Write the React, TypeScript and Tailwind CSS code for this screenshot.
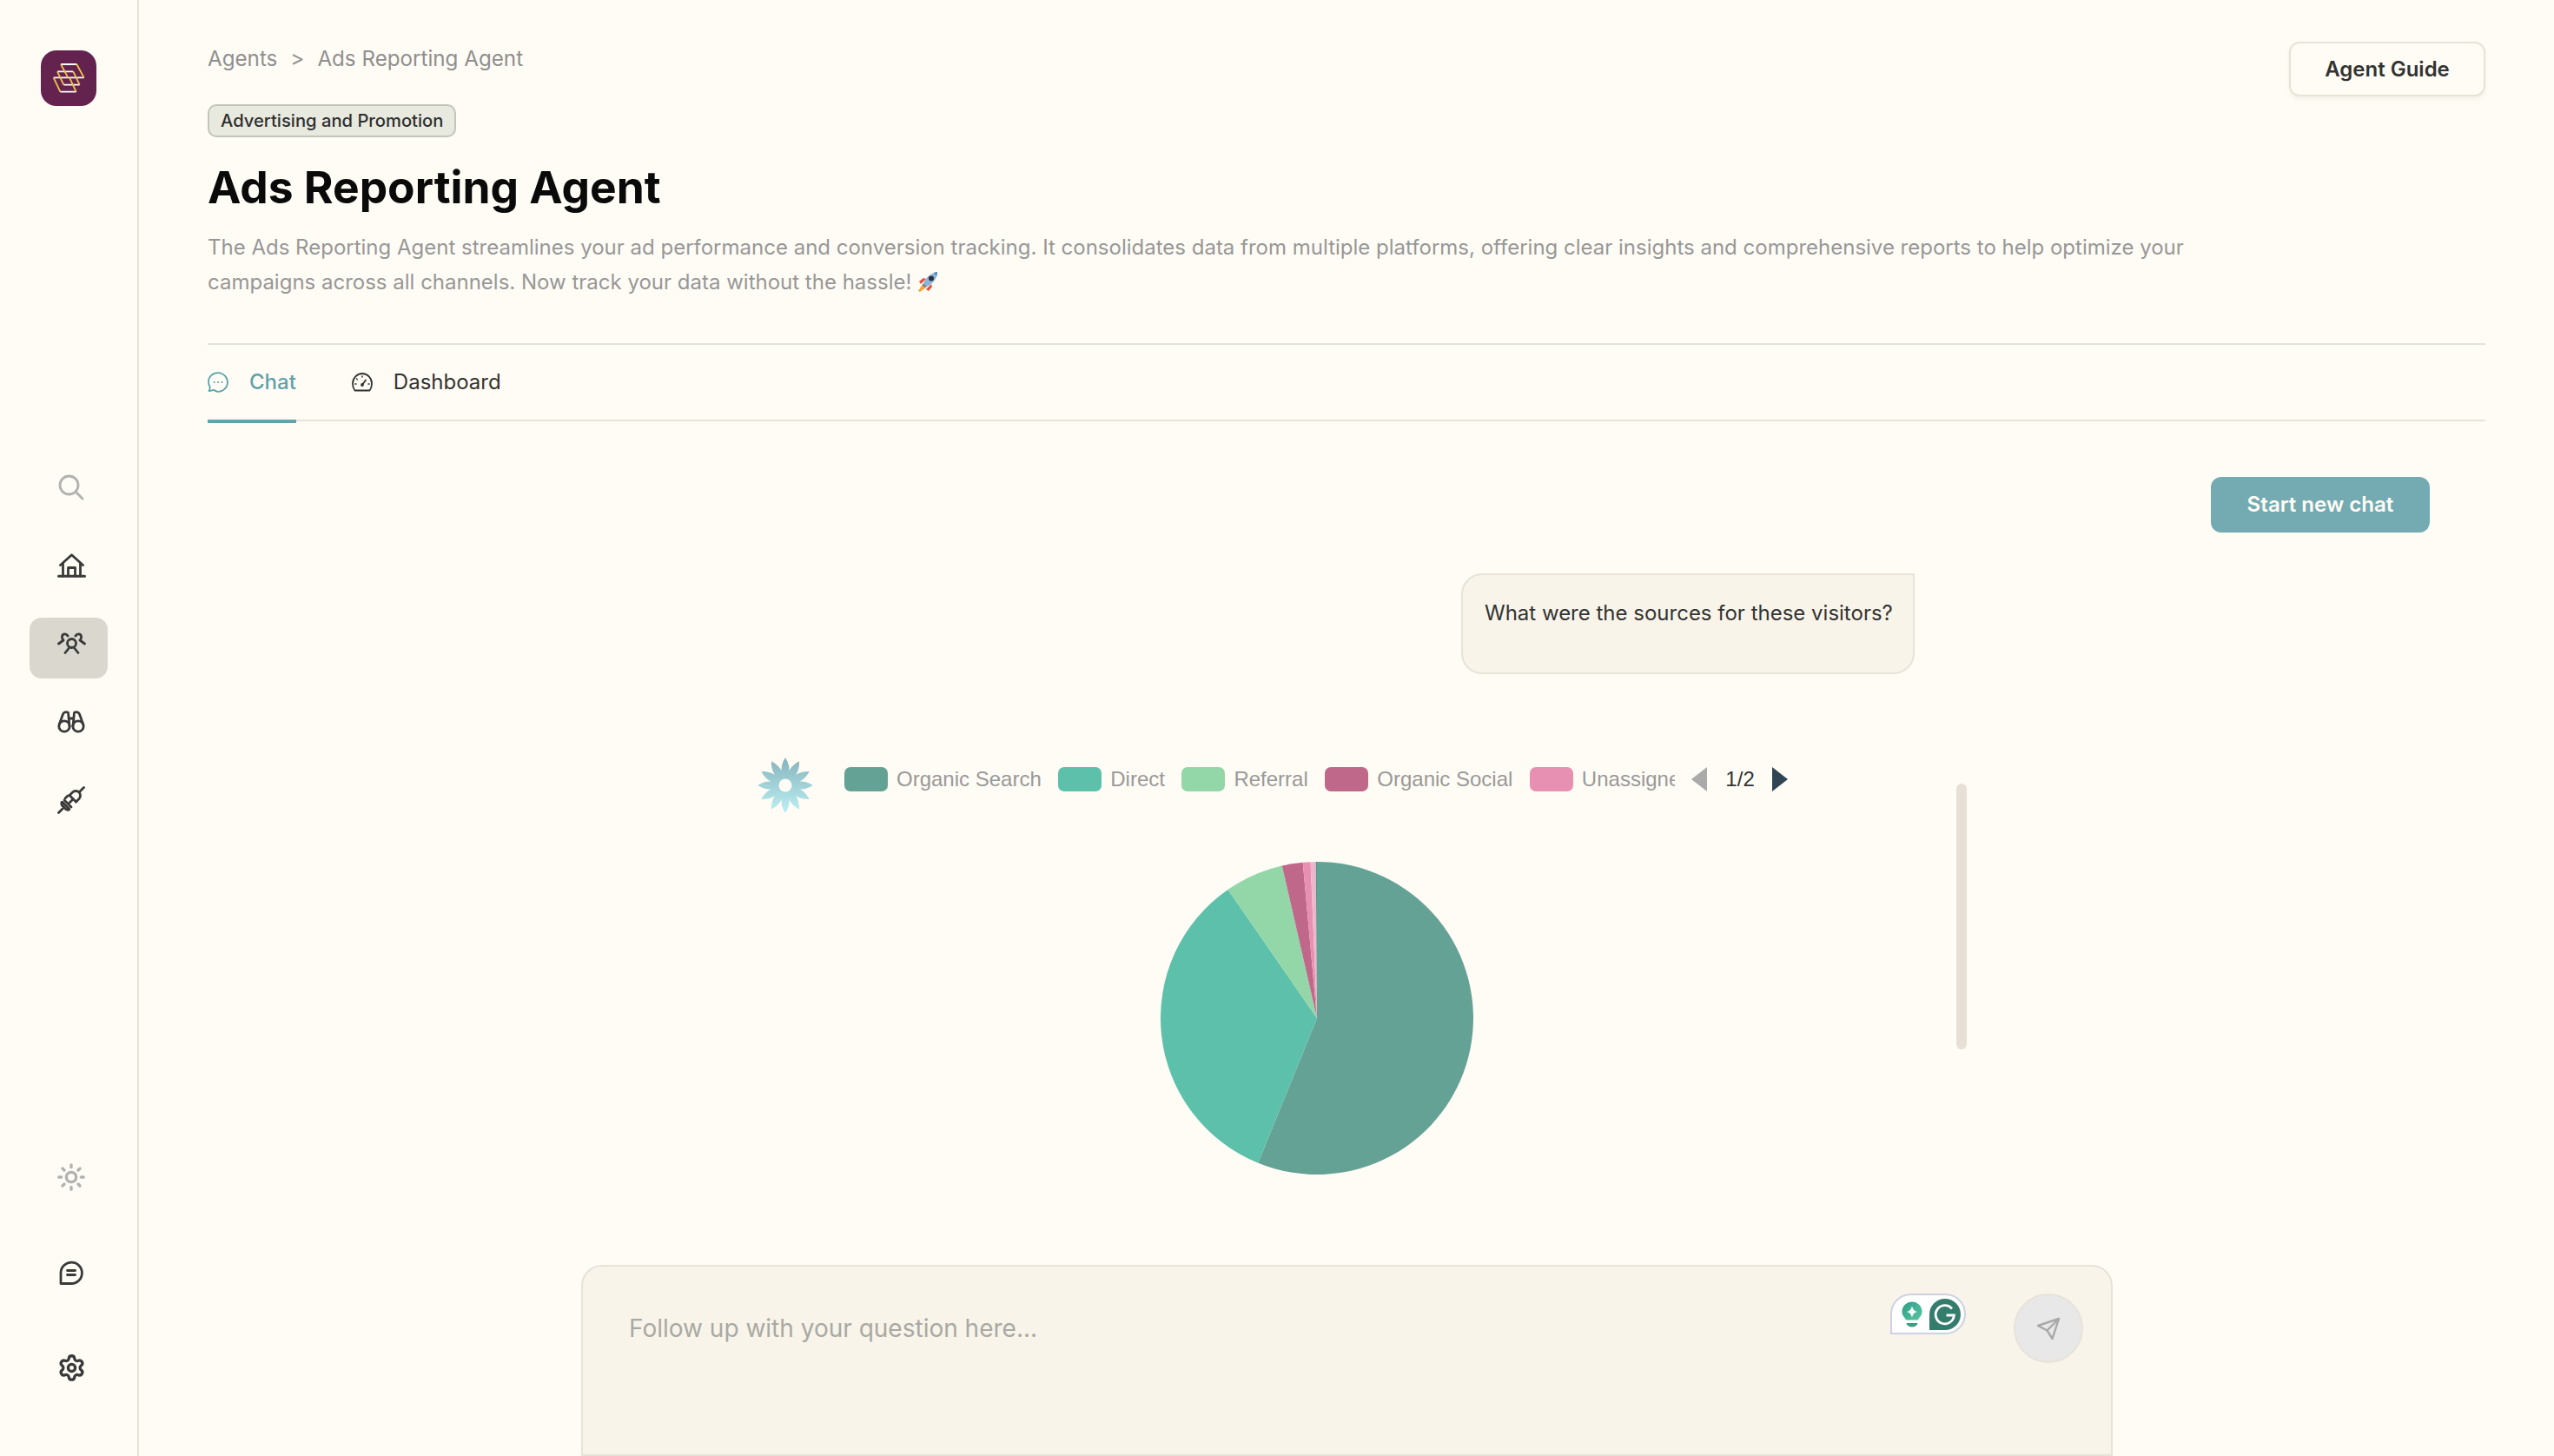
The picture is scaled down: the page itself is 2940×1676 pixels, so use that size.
import { Settings, Sun } from "lucide-react";
import type { ReactNode } from "react";

const INK = "#3a3a3a";
const MUTED = "#b2b2b2";

/* pie slices, in degrees clockwise from the top */
const slices = [
  { from: 0, to: 202.1, color: "#65a296" },
  { from: 202.1, to: 325.3, color: "#5dc0aa" },
  { from: 325.3, to: 347.1, color: "#93d7a9" },
  { from: 347.1, to: 354.8, color: "#c0688a" },
  { from: 354.8, to: 357.65, color: "#e890b2" },
  { from: 357.65, to: 359.6, color: "#eeb6cc" },
  { from: 359.6, to: 360, color: "#4f9a8c" },
];

const legend = [
  { label: "Organic Search", color: "#65a296" },
  { label: "Direct", color: "#5dc0aa" },
  { label: "Referral", color: "#93d7a9" },
  { label: "Organic Social", color: "#c0688a" },
  { label: "Unassigned", color: "#e890b2" },
];

function slicePath(from: number, to: number) {
  const r = 180;
  const pt = (deg: number) => {
    const a = (deg * Math.PI) / 180;
    return `${(180 + r * Math.sin(a)).toFixed(2)} ${(180 - r * Math.cos(a)).toFixed(2)}`;
  };
  const large = to - from > 180 ? 1 : 0;
  return `M180 180 L${pt(from)} A${r} ${r} 0 ${large} 1 ${pt(to)} Z`;
}

function flowerPath() {
  let d = "";
  for (let i = 0; i < 12; i++) {
    const a = (i * 30 * Math.PI) / 180;
    const p = (r: number, off: number) => {
      const x = 31 + r * Math.sin(a) + off * Math.cos(a);
      const y = 32 - r * Math.cos(a) + off * Math.sin(a);
      return `${x.toFixed(2)} ${y.toFixed(2)}`;
    };
    d += `M${p(4, 0)} Q${p(18, 9)} ${p(32, 0)} Q${p(18, -9)} ${p(4, 0)} Z `;
  }
  return d;
}

function Logo() {
  return (
    <div className="w-[64px] h-[64px] rounded-[18px] bg-[#63234e]">
      <svg viewBox="21 24 192 192" className="w-full h-full" fill="none" strokeWidth="5.5">
        <g stroke="#fff">
          <path d="M90 72H145M115 118H170M78 97H133M100 143H155M65 118H120M88 167H143" />
        </g>
        <g stroke="#f2c24b">
          <path d="M90 72L115 118M145 72L170 118M78 97L100 143M133 97L155 143M65 118L88 167M120 118L143 167" />
        </g>
      </svg>
    </div>
  );
}

function SearchIcon() {
  return (
    <svg width="30" height="30" viewBox="0 0 30 30" fill="none" stroke={MUTED} strokeWidth="2.8" strokeLinecap="round">
      <circle cx="12.5" cy="12.5" r="10.5" />
      <path d="M20.5 20.5L28 28" />
    </svg>
  );
}

function HomeIcon() {
  return (
    <svg width="33" height="28" viewBox="0 0 33 28" fill="none" stroke={INK} strokeWidth="2.8" strokeLinecap="round" strokeLinejoin="round">
      <path d="M3.5 13.5L16.5 1.8L29.5 13.5" />
      <path d="M6.5 11.5V26M26.5 11.5V26" />
      <path d="M1.5 26.3H31.5" strokeWidth="3" />
      <path d="M12.5 26V16.5H20.5V26" />
    </svg>
  );
}

function PeopleIcon() {
  return (
    <svg width="33" height="25" viewBox="0 0 33 25" fill="none" stroke={INK} strokeWidth="2.8" strokeLinecap="round" strokeLinejoin="round">
      <circle cx="16.5" cy="12.5" r="5" />
      <path d="M9 23.5L13 18.5M24 23.5L20 18.5" />
      <path d="M12 4C10.5 1 6 1.2 5.5 4.5C5.2 6.5 6 8 7 9L1.5 13" />
      <path d="M21 4C22.5 1 27 1.2 27.5 4.5C27.8 6.5 27 8 26 9L31.5 13" />
    </svg>
  );
}

function BinocularsIcon() {
  return (
    <svg width="32" height="26" viewBox="0 0 32 26" fill="none" stroke={INK} strokeWidth="2.8" strokeLinecap="round" strokeLinejoin="round">
      <circle cx="8" cy="18" r="6.2" />
      <circle cx="24" cy="18" r="6.2" />
      <path d="M2.2 16L6.5 4C7.2 2 10 1 12.5 2.2L14 18" />
      <path d="M29.8 16L25.5 4C24.8 2 22 1 19.5 2.2L18 18" />
      <path d="M13.5 9H18.5" />
    </svg>
  );
}

function PlugIcon() {
  return (
    <svg width="32" height="32" viewBox="0 0 32 32" fill="none" stroke={INK} strokeWidth="2.8" strokeLinecap="round" strokeLinejoin="round">
      <path d="M1.5 30.5L6 26" />
      <path d="M6 18.5L13.5 26C15 27.5 11 27.8 9.5 26.3L5.8 22.6C4.3 21 4.5 17 6 18.5Z" />
      <path d="M8 16L16 24M9 14L12 11M14 19L17 16" />
      <path d="M14 10.5L21.5 18" />
      <path d="M14 10.5L17.5 7C19.5 5 23 5 25 7C27 9 27 12.5 25 14.5L21.5 18" />
      <path d="M25.5 6.5L30.5 1.5" />
    </svg>
  );
}

function BubbleIcon() {
  return (
    <svg width="28" height="28" viewBox="0 0 28 28" fill="none" stroke={INK} strokeWidth="2.8" strokeLinejoin="round" strokeLinecap="round">
      <path d="M2 26.5V14A12.2 12.2 0 1 1 14.2 26.5Z" />
      <path d="M9.5 11.5H18.5M9.5 16.5H18.5" />
    </svg>
  );
}

function ChatTabIcon() {
  return (
    <svg width="24" height="24" viewBox="0 0 24 24" fill="none" stroke="#5fa3ab" strokeWidth="1.8" strokeLinecap="round" strokeLinejoin="round" className="shrink-0">
      <path d="M12 1.2C5.8 1.2 1 5.6 1 11.2C1 13.6 1.6 15.4 2.6 17C2.8 18.6 2.4 20.6 1.6 22C3.6 22 5.4 21.6 7 20.8C8.6 22 10.4 22.8 12 22.8C18 22.8 23 18 23 12C23 6 18 1.2 12 1.2Z" />
      <path d="M7.6 12H7.7M12 12H12.1M16.4 12H16.5" strokeWidth="2" />
    </svg>
  );
}

function GaugeIcon() {
  return (
    <svg width="24" height="24" viewBox="0 0 24 24" fill="none" stroke="#333" strokeWidth="1.8" strokeLinecap="round" strokeLinejoin="round" className="shrink-0">
      <path d="M3.5 21.5C1.8 19.4 1 17 1 13.5C1 7 6 2 12 2C18 2 23 7 23 13.5C23 17 22.2 19.4 20.5 21.5Z" />
      <path d="M12 15L16 9.5" />
      <path d="M12 5V6M5.5 8L6.3 8.8M3.8 14H5M19 14H20.2" strokeWidth="1.5" />
      <circle cx="12" cy="15" r="1" fill="#333" />
    </svg>
  );
}

function Rocket() {
  return (
    <svg viewBox="0 0 28 28" className="inline-block w-[28px] h-[28px] align-[-6px] ml-[5px]">
      <path d="M8 16L3 24L5 25L12 20Z" fill="#f4a63a" />
      <path d="M4 13L9 9L12 10L6 16Z" fill="#e2503c" />
      <path d="M15 24L19 19L18 16L12 22Z" fill="#e2503c" />
      <path d="M9 15C12 8 18 3 25 2C25 10 20 15 13 19Z" fill="#8db4d6" />
      <path d="M9 15L13 19L11 20L8 17Z" fill="#5d7da0" />
      <circle cx="18" cy="9.5" r="3" fill="#27313f" />
      <path d="M21 2.8L25 2C25 4 24.6 5.8 24 7Z" fill="#4d88c6" />
    </svg>
  );
}

function NavItem({ children, active }: { children: ReactNode; active?: boolean }) {
  return (
    <a className={active ? "w-[90px] h-[70px] rounded-[14px] bg-[#d9d7ce] flex items-center justify-center pb-[11px] pl-[6px]" : "w-[90px] h-[70px] rounded-[14px] flex items-center justify-center pb-[11px] pl-[6px]"}>
      {children}
    </a>
  );
}

function GrammarlyBadge() {
  return (
    <div className="absolute top-[31px] right-[167px] w-[87px] h-[47px] bg-white border-2 border-[#cdd1e2] rounded-t-[24px] rounded-br-[24px] flex items-center justify-between pl-[11px] pr-[4px]">
      <svg width="24" height="30" viewBox="0 0 24 30">
        <defs>
          <linearGradient id="bulb" x1="0" y1="0" x2="1" y2="1">
            <stop offset="0" stopColor="#2f9c83" />
            <stop offset="1" stopColor="#58c7a5" />
          </linearGradient>
        </defs>
        <path d="M12 0.5A11.5 11.5 0 0 1 23.5 12C23.5 16.5 20.5 18.5 18.5 21.5H5.5C3.5 18.5 0.5 16.5 0.5 12A11.5 11.5 0 0 1 12 0.5Z" fill="url(#bulb)" />
        <path d="M5.5 25H18.5C18 28 15.5 29.5 12 29.5C8.5 29.5 6 28 5.5 25Z" fill="#3a9c84" />
        <path d="M12 5C12.8 9 14 10.6 18 12C14 13.4 12.8 15 12 19C11.2 15 10 13.4 6 12C10 10.6 11.2 9 12 5Z" fill="#fff" />
      </svg>
      <svg width="36" height="36" viewBox="0 0 36 36" fill="none">
        <path d="M0 36V18A18 18 0 1 1 18 36Z" fill="#347c6c" />
        <path d="M26 11.5A10.6 10.6 0 1 0 28.4 19H19.5" stroke="#fff" strokeWidth="2.8" />
      </svg>
    </div>
  );
}

export default function App() {
  return (
    <div className="w-[2940px] h-[1676px] overflow-hidden flex bg-[#fffcf5] [font-family:Inter,sans-serif]">
      {/* Sidebar */}
      <aside className="w-[160px] shrink-0 border-r-2 border-[#e8e3d9] flex flex-col items-center pt-[58px] pb-[61px]">
        <Logo />
        <nav className="mt-[409px] flex flex-col gap-[20px]">
          <NavItem><SearchIcon /></NavItem>
          <NavItem><HomeIcon /></NavItem>
          <NavItem active><PeopleIcon /></NavItem>
          <NavItem><BinocularsIcon /></NavItem>
          <NavItem><PlugIcon /></NavItem>
        </nav>
        <div className="mt-auto flex flex-col gap-[40px]">
          <NavItem><Sun size={34} color={MUTED} strokeWidth={2.4} /></NavItem>
          <NavItem><BubbleIcon /></NavItem>
          <NavItem><Settings size={33} color={INK} strokeWidth={2.4} /></NavItem>
        </div>
      </aside>

      {/* Main */}
      <main className="flex-1 min-w-0 px-[79px] pt-[48px]">
        <div className="flex items-start justify-between">
          <div>
            <div className="flex items-center gap-[15px] text-[24.2px] leading-[40px] text-[#8f8f8f]">
              <span>Agents</span>
              <span>&gt;</span>
              <span>Ads Reporting Agent</span>
            </div>
            <span className="mt-[32px] inline-flex items-center h-[38px] px-[13px] rounded-[10px] border-2 border-[#c2c5b9] bg-[#e8eadf] text-[20.2px] font-medium text-[#2f2f2f]">
              Advertising and Promotion
            </span>
            <h1 className="mt-[25px] text-[51.5px] leading-[64px] font-bold text-[#0a0a0a]">Ads Reporting Agent</h1>
            <p className="mt-[18px] w-[2300px] text-[24px] leading-[40px] text-[#979797]">
              The Ads Reporting Agent streamlines your ad performance and conversion tracking. It consolidates data from multiple platforms, offering clear insights and comprehensive reports to help optimize your campaigns across all channels. Now track your data without the hassle!
              <Rocket />
            </p>
          </div>
          <button className="w-[226px] h-[63px] shrink-0 rounded-[12px] border-2 border-[#e8e3d9] bg-[#fffcf5] shadow-[0_3px_4px_rgba(120,110,90,0.08)] text-[24px] font-semibold text-[#333]">
            Agent Guide
          </button>
        </div>

        {/* Tabs */}
        <div className="mt-[50px] h-[90px] border-t-2 border-b-2 border-[#e8e3d9] flex gap-[64px]">
          <div className="relative h-[88px] pb-[2px] flex items-center gap-[24px] text-[24px] font-medium text-[#5fa3ab]">
            <ChatTabIcon />
            <span>Chat</span>
            <span className="absolute left-0 right-0 -bottom-[2px] h-[4px] bg-[#5fa3ab]" />
          </div>
          <div className="h-[88px] pb-[2px] flex items-center gap-[24px] text-[24px] text-[#333]">
            <GaugeIcon />
            <span>Dashboard</span>
          </div>
        </div>

        <div className="mt-[64px] flex justify-end pr-[64px]">
          <button className="w-[252px] h-[64px] rounded-[12px] bg-[#74abb2] text-[24.1px] font-semibold text-[#fffcf5]">
            Start new chat
          </button>
        </div>

        {/* User message */}
        <div className="mt-[47px] flex justify-end pr-[657px]">
          <div className="w-[522px] h-[116px] px-[25px] pt-[24px] rounded-[24px] rounded-tr-none border-2 border-[#e8e3d9] bg-[#f8f4e9] text-[24px] leading-[40px] text-[#333] whitespace-nowrap">
            What were the sources for these visitors?
          </div>
        </div>

        {/* Agent answer */}
        <div className="mt-[96px] ml-[634px] flex items-start">
          <svg width="62" height="64" viewBox="0 0 62 64" className="shrink-0">
            <defs>
              <linearGradient id="petals" x1="0" y1="0" x2="0" y2="1">
                <stop offset="0" stopColor="#86b3bc" />
                <stop offset="1" stopColor="#bdf0f4" />
              </linearGradient>
            </defs>
            <path d={flowerPath()} fill="url(#petals)" />
            <circle cx="31" cy="32" r="7.5" fill="#fffcf5" />
          </svg>
          <div className="ml-[37px] w-[1088px] shrink-0">
            <div className="mt-[11px] h-[28px] flex items-center [font-family:Liberation_Sans,Arial,sans-serif] text-[24px] text-[#999]">
              {legend.map((item, i) => (
                <div key={item.label} className="flex items-center gap-[10px] mr-[19.5px] shrink-0">
                  <span className="w-[50px] h-[28px] rounded-[7px] shrink-0" style={{ backgroundColor: item.color }} />
                  <span className={i === 4 ? "w-[107px] overflow-hidden whitespace-nowrap" : "whitespace-nowrap"}>{item.label}</span>
                </div>
              ))}
              <svg width="18" height="28" viewBox="0 0 18 28" className="shrink-0"><path d="M18 0V28L0 14Z" fill="#aaa" /></svg>
              <span className="ml-[21px] mr-[20px] text-[24px] text-[#333] shrink-0">1/2</span>
              <svg width="18" height="28" viewBox="0 0 18 28" className="shrink-0"><path d="M0 0V28L18 14Z" fill="#2f4554" /></svg>
            </div>
            <svg width="360" height="360" viewBox="0 0 360 360" className="mt-[81px] mx-auto">
              {slices.map((s) => (
                <path key={s.from} d={slicePath(s.from, s.to)} fill={s.color} />
              ))}
            </svg>
          </div>
          <div className="ml-[192px] mt-[30px] w-[12px] h-[306px] rounded-full bg-[#e6e0d7] shrink-0" />
        </div>

        {/* Composer */}
        <div className="relative mt-[104px] ml-[430px] w-[1763px] h-[220px] rounded-t-[24px] border-2 border-[#e8e3d9] bg-[#f8f4e9] flex items-start justify-between pl-[53px] pr-[32px] pt-[31px]">
          <span className="mt-[20px] text-[28px] leading-[40px] text-[#a9a9a4]">Follow up with your question here...</span>
          <GrammarlyBadge />
          <button className="w-[80px] h-[80px] rounded-full border-2 border-[#e8e3d9] bg-[#e8e8e8] flex items-center justify-center">
            <svg width="28" height="28" viewBox="0 0 28 28" fill="none" stroke="#a8a8a8" strokeWidth="2.4" strokeLinejoin="round" strokeLinecap="round">
              <path d="M2 11L26 3L18.5 26L12.5 16.5Z" />
              <path d="M12.5 16.5L26 3" />
            </svg>
          </button>
        </div>
      </main>
    </div>
  );
}
